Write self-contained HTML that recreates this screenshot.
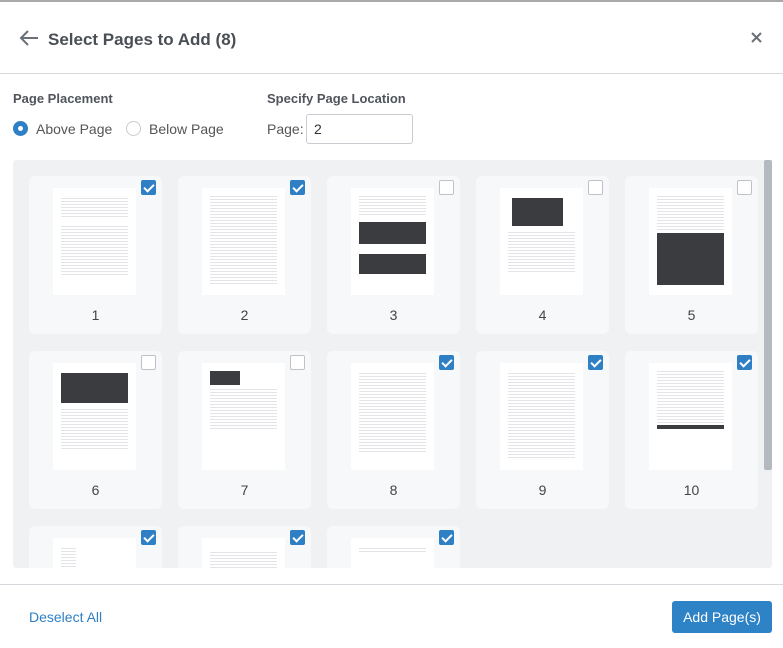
<!DOCTYPE html>
<html style="width:783px;height:648px;overflow:hidden"><head><meta charset="utf-8"><style>
*{box-sizing:border-box;margin:0;padding:0}
body{width:783px;height:648px;overflow:hidden;background:#fff;font-family:"Liberation Sans",sans-serif;position:relative;color:#444}
.top{position:absolute;left:0;top:0;width:783px;height:2px;background:#a9a9a9}
.hdr{position:absolute;left:0;top:73px;width:783px;height:1px;background:#d5d8dc}
.title{position:absolute;left:48px;top:30px;font-size:17px;font-weight:bold;color:#4a4f55}
.lbl{position:absolute;font-size:13px;font-weight:bold;color:#50555b}
.txt{position:absolute;font-size:14px;color:#555}
.radio{position:absolute;width:15px;height:15px;border-radius:50%;border:1px solid #c8ccd0;background:#fff}
.radio.on{background:#2e7fc4;border-color:#2e7fc4}
.radio.on:after{content:"";position:absolute;left:4px;top:4px;width:5px;height:5px;border-radius:50%;background:#fff}
.inp{position:absolute;left:306px;top:114px;width:107px;height:30px;border:1px solid #c8ccd0;border-radius:3px;font-size:14px;padding:6px 0 0 7px;color:#333}
.grid{position:absolute;left:13px;top:160px;width:759px;height:408px;background:#f0f1f3;overflow:hidden;border-radius:3px}
.sb{position:absolute;left:764px;top:160px;width:8px;height:310px;background:#b4b9bf;border-radius:2px}
.card{position:absolute;width:133px;height:158px;background:#f7f8fa;border-radius:6px}
.th{position:absolute;left:24px;top:12px;width:83px;height:107px;background:#fff;overflow:hidden}
.ln{position:absolute;left:8px;right:8px;height:50px;background:repeating-linear-gradient(#e2e4e7 0 1px,transparent 1px 3px)}
.dk{position:absolute;left:8px;right:8px;background:#3a3c3f}
.cb{position:absolute;left:112px;top:4px;width:15px;height:15px;border:1px solid #bfc3c8;background:#fff;border-radius:2px}
.cb.on{background:#2e7fc4;border-color:#2e7fc4}
.cb.on:after{content:"";position:absolute;left:4px;top:1px;width:4px;height:8px;border:solid #fff;border-width:0 2px 2px 0;transform:rotate(45deg)}
.num{position:absolute;left:0;width:133px;top:131px;text-align:center;font-size:14px;color:#444}
.foot{position:absolute;left:0;top:584px;width:783px;height:1px;background:#d5d8dc}
.btn{position:absolute;left:672px;top:601px;width:100px;height:32px;background:#2e82c6;border-radius:3px;color:#fff;font-size:14px;text-align:center;line-height:32px}
</style></head><body>
<div class="top"></div>
<svg style="position:absolute;left:19px;top:29px" width="20" height="18" viewBox="0 0 20 18"><path d="M19 9H2M9 2L2 9l7 7" fill="none" stroke="#6a7078" stroke-width="2"/></svg>
<div class="title">Select Pages to Add (8)</div>
<svg style="position:absolute;left:751px;top:32px" width="11" height="11" viewBox="0 0 11 11"><path d="M1 1l9 9M10 1l-9 9" stroke="#6a7078" stroke-width="2"/></svg>
<div class="hdr"></div>
<div class="lbl" style="left:13px;top:91px">Page Placement</div>
<div class="radio on" style="left:13px;top:121px"></div>
<div class="txt" style="left:36px;top:121px">Above Page</div>
<div class="radio" style="left:126px;top:121px"></div>
<div class="txt" style="left:149px;top:121px">Below Page</div>
<div class="lbl" style="left:267px;top:91px">Specify Page Location</div>
<div class="txt" style="left:267px;top:121px">Page:</div>
<div class="inp">2</div>
<div class="grid">
<div class="card" style="left:16px;top:16px"><div class="th"><div class="ln" style="top:10px;height:20px"></div><div class="ln" style="top:38px"></div></div><div class="cb on"></div><div class="num">1</div></div>
<div class="card" style="left:165px;top:16px"><div class="th"><div class="ln" style="top:8px;height:88px"></div></div><div class="cb on"></div><div class="num">2</div></div>
<div class="card" style="left:314px;top:16px"><div class="th"><div class="ln" style="top:8px;height:20px"></div><div class="dk" style="top:34px;height:22px"></div><div class="dk" style="top:66px;height:20px"></div></div><div class="cb"></div><div class="num">3</div></div>
<div class="card" style="left:463px;top:16px"><div class="th"><div class="dk" style="top:10px;height:28px;left:12px;right:20px"></div><div class="ln" style="top:44px;height:40px"></div></div><div class="cb"></div><div class="num">4</div></div>
<div class="card" style="left:612px;top:16px"><div class="th"><div class="ln" style="top:8px;height:36px"></div><div class="dk" style="top:45px;height:52px"></div></div><div class="cb"></div><div class="num">5</div></div>
<div class="card" style="left:16px;top:191px"><div class="th"><div class="dk" style="top:10px;height:30px"></div><div class="ln" style="top:46px;height:40px"></div></div><div class="cb"></div><div class="num">6</div></div>
<div class="card" style="left:165px;top:191px"><div class="th"><div class="dk" style="top:8px;height:14px;right:45px"></div><div class="ln" style="top:26px;height:40px"></div></div><div class="cb"></div><div class="num">7</div></div>
<div class="card" style="left:314px;top:191px"><div class="th"><div class="ln" style="top:10px;height:80px"></div></div><div class="cb on"></div><div class="num">8</div></div>
<div class="card" style="left:463px;top:191px"><div class="th"><div class="ln" style="top:10px;height:85px"></div></div><div class="cb on"></div><div class="num">9</div></div>
<div class="card" style="left:612px;top:191px"><div class="th"><div class="ln" style="top:8px;height:52px"></div><div class="dk" style="top:62px;height:4px"></div></div><div class="cb on"></div><div class="num">10</div></div>
<div class="card" style="left:16px;top:366px"><div class="th"><div class="ln" style="top:10px;height:40px;right:60px"></div></div><div class="cb on"></div></div>
<div class="card" style="left:165px;top:366px"><div class="th"><div class="ln" style="top:14px;height:30px"></div></div><div class="cb on"></div></div>
<div class="card" style="left:314px;top:366px"><div class="th"><div class="ln" style="top:10px;height:4px"></div></div><div class="cb on"></div></div>
</div>
<div class="sb"></div>
<div class="foot"></div>
<div style="position:absolute;left:29px;top:609px;font-size:14px;color:#2e7fc4">Deselect All</div>
<div class="btn">Add Page(s)</div>
</body></html>
